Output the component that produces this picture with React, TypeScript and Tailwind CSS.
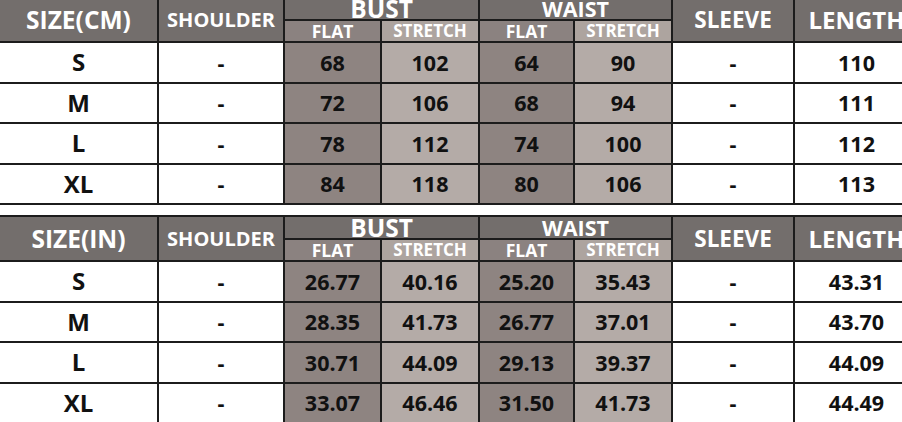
import React from "react";

type Row = { size: string; bust: [string, string]; waist: [string, string]; length: string };

const cmRows: Row[] = [
  { size: "S", bust: ["68", "102"], waist: ["64", "90"], length: "110" },
  { size: "M", bust: ["72", "106"], waist: ["68", "94"], length: "111" },
  { size: "L", bust: ["78", "112"], waist: ["74", "100"], length: "112" },
  { size: "XL", bust: ["84", "118"], waist: ["80", "106"], length: "113" },
];

const inRows: Row[] = [
  { size: "S", bust: ["26.77", "40.16"], waist: ["25.20", "35.43"], length: "43.31" },
  { size: "M", bust: ["28.35", "41.73"], waist: ["26.77", "37.01"], length: "43.70" },
  { size: "L", bust: ["30.71", "44.09"], waist: ["29.13", "39.37"], length: "44.09" },
  { size: "XL", bust: ["33.07", "46.46"], waist: ["31.50", "41.73"], length: "44.49" },
];

const SizeTable = ({ unit, rows }: { unit: string; rows: Row[] }) => {
  const th = "border-2 border-[#1c1c1c] bg-[#736e6c] text-white font-bold text-center p-0 leading-[16px]";
  const flatHead = "border-2 border-[#1c1c1c] bg-[#8b8280] text-white font-bold text-center p-0 text-[17.5px] leading-[16px]";
  const stretchHead = "border-2 border-[#1c1c1c] bg-[#ada49f] text-white font-bold text-center p-0 text-[17px] leading-[16px]";
  const td = "border-2 border-[#1c1c1c] text-center p-0 font-bold text-[#111] text-[21.5px] leading-none";
  return (
    <table className="table-fixed border-collapse w-[920px] -ml-[2px]">
      <colgroup>
        <col className="w-[159px]" />
        <col className="w-[126px]" />
        <col className="w-[97px]" />
        <col className="w-[98px]" />
        <col className="w-[95px]" />
        <col className="w-[98px]" />
        <col className="w-[122px]" />
        <col className="w-[125px]" />
      </colgroup>
      <thead>
        <tr className="h-[23px]">
          <th rowSpan={2} className={`${th} text-[24.5px]`}>SIZE({unit})</th>
          <th rowSpan={2} className={`${th} text-[20px]`}>SHOULDER</th>
          <th colSpan={2} className={`${th} text-[24.5px]`}>BUST</th>
          <th colSpan={2} className={`${th} text-[21.5px]`}>WAIST</th>
          <th rowSpan={2} className={`${th} text-[22.5px]`}>SLEEVE</th>
          <th rowSpan={2} className={`${th} text-[24px]`}>LENGTH</th>
        </tr>
        <tr className="h-[22px]">
          <th className={flatHead}>FLAT</th>
          <th className={stretchHead}>STRETCH</th>
          <th className={flatHead}>FLAT</th>
          <th className={stretchHead}>STRETCH</th>
        </tr>
      </thead>
      <tbody>
        {rows.map((r) => (
          <tr key={r.size} className="h-[40.5px]">
            <td className={`${td} bg-white text-[24px]`}>{r.size}</td>
            <td className={`${td} bg-white`}>-</td>
            <td className={`${td} bg-[#8e8481]`}>{r.bust[0]}</td>
            <td className={`${td} bg-[#b4aba7]`}>{r.bust[1]}</td>
            <td className={`${td} bg-[#8e8481]`}>{r.waist[0]}</td>
            <td className={`${td} bg-[#b4aba7]`}>{r.waist[1]}</td>
            <td className={`${td} bg-white`}>-</td>
            <td className={`${td} bg-white`}>{r.length}</td>
          </tr>
        ))}
      </tbody>
    </table>
  );
};

export default function App() {
  return (
    <div
      className="w-[902px] h-[422px] overflow-hidden bg-white"
      style={{ fontFamily: '"Open Sans", "Noto Sans", sans-serif' }}
    >
      <div className="flex flex-col gap-[10px] -mt-[4px]">
        <SizeTable unit="CM" rows={cmRows} />
        <SizeTable unit="IN" rows={inRows} />
      </div>
    </div>
  );
}
